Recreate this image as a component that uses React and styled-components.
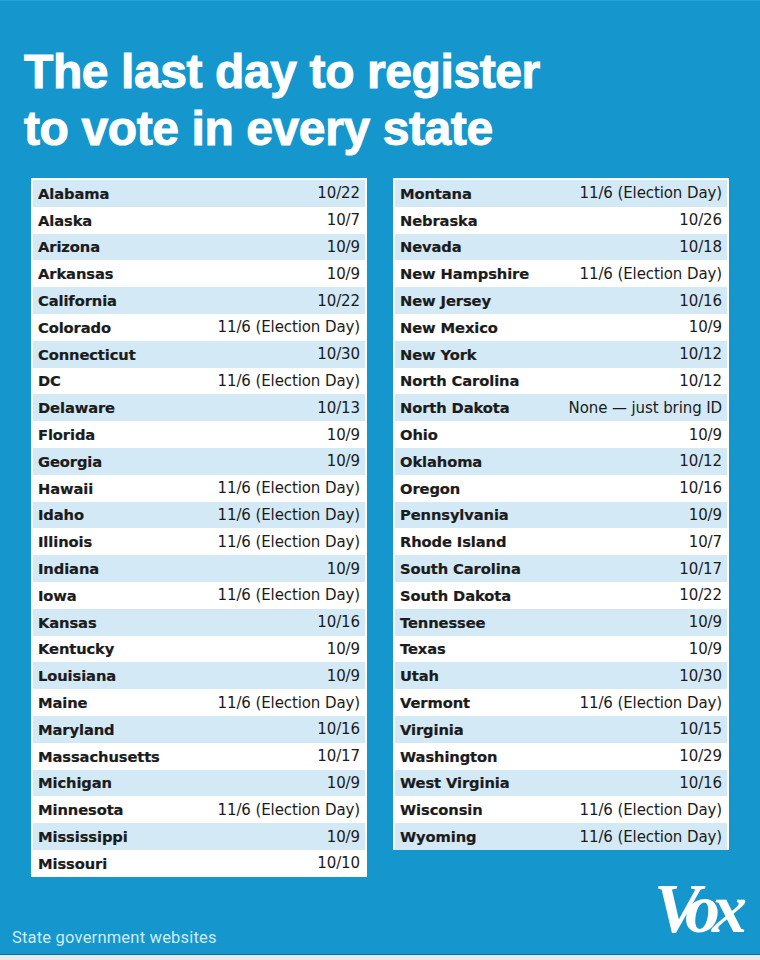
import React from "react";
import styled, { createGlobalStyle } from "styled-components";

const LEFT = [
  ["Alabama", "10/22"],
  ["Alaska", "10/7"],
  ["Arizona", "10/9"],
  ["Arkansas", "10/9"],
  ["California", "10/22"],
  ["Colorado", "11/6 (Election Day)"],
  ["Connecticut", "10/30"],
  ["DC", "11/6 (Election Day)"],
  ["Delaware", "10/13"],
  ["Florida", "10/9"],
  ["Georgia", "10/9"],
  ["Hawaii", "11/6 (Election Day)"],
  ["Idaho", "11/6 (Election Day)"],
  ["Illinois", "11/6 (Election Day)"],
  ["Indiana", "10/9"],
  ["Iowa", "11/6 (Election Day)"],
  ["Kansas", "10/16"],
  ["Kentucky", "10/9"],
  ["Louisiana", "10/9"],
  ["Maine", "11/6 (Election Day)"],
  ["Maryland", "10/16"],
  ["Massachusetts", "10/17"],
  ["Michigan", "10/9"],
  ["Minnesota", "11/6 (Election Day)"],
  ["Mississippi", "10/9"],
  ["Missouri", "10/10"],
];

const RIGHT = [
  ["Montana", "11/6 (Election Day)"],
  ["Nebraska", "10/26"],
  ["Nevada", "10/18"],
  ["New Hampshire", "11/6 (Election Day)"],
  ["New Jersey", "10/16"],
  ["New Mexico", "10/9"],
  ["New York", "10/12"],
  ["North Carolina", "10/12"],
  ["North Dakota", "None — just bring ID"],
  ["Ohio", "10/9"],
  ["Oklahoma", "10/12"],
  ["Oregon", "10/16"],
  ["Pennsylvania", "10/9"],
  ["Rhode Island", "10/7"],
  ["South Carolina", "10/17"],
  ["South Dakota", "10/22"],
  ["Tennessee", "10/9"],
  ["Texas", "10/9"],
  ["Utah", "10/30"],
  ["Vermont", "11/6 (Election Day)"],
  ["Virginia", "10/15"],
  ["Washington", "10/29"],
  ["West Virginia", "10/16"],
  ["Wisconsin", "11/6 (Election Day)"],
  ["Wyoming", "11/6 (Election Day)"],
];

function StateTable({ rows }) {
  return (
    <Table>
      {rows.map(([name, date], i) => (
        <Row key={name} $shaded={i % 2 === 0}>
          <StateName>{name}</StateName>
          <Deadline>{date}</Deadline>
        </Row>
      ))}
    </Table>
  );
}

function App() {
  return (
    <>
      <GlobalStyle />
      <Page>
        <Title>
          The last day to register
          <br />
          to vote in every state
        </Title>

        <Columns>
          <StateTable rows={LEFT} />
          <StateTable rows={RIGHT} />
        </Columns>

        <Footer>
          <Source>State government websites</Source>
          <Logo>Vox</Logo>
        </Footer>
        <BottomBand />
      </Page>
    </>
  );
}

const GlobalStyle = createGlobalStyle`
  body {
    margin: 0;
    background: #1597ce;
  }
`;

const Page = styled.div`
  width: 760px;
  height: 960px;
  background: #1597ce;
  display: flex;
  flex-direction: column;
  box-sizing: border-box;
  border-top: 1px solid #2aa3d6;
  overflow: hidden;
`;

// 1.제목
const Title = styled.h1`
  margin: 0;
  padding: 42px 0 0 24px;
  font-family: "Liberation Sans", Arial, sans-serif;
  font-weight: 700;
  font-size: 48px;
  line-height: 57px;
  letter-spacing: -0.4px;
  color: #fff;
  -webkit-text-stroke: 1px #fff;
`;

// 2.표 두 개
const Columns = styled.div`
  display: grid;
  grid-template-columns: 336px 336px;
  column-gap: 26px;
  align-items: start;
  margin-top: 21px;
  padding-left: 31px;
`;

const Table = styled.div`
  background: #fff;
  padding: 2px 2px 0;
  display: flex;
  flex-direction: column;
`;

const Row = styled.div`
  height: 26.8px;
  display: flex;
  align-items: center;
  justify-content: space-between;
  padding: 0 5px;
  background: ${(p) => (p.$shaded ? "#d3e9f6" : "#fff")};
  color: #1b1b1b;
  font-family: "DejaVu Sans", sans-serif;
`;

const StateName = styled.span`
  font-weight: 700;
  font-size: 14.7px;
  letter-spacing: -0.1px;
  -webkit-text-stroke: 0.2px #1b1b1b;
`;

const Deadline = styled.span`
  font-weight: 400;
  font-size: 15px;
  letter-spacing: -0.1px;
`;

// 3.출처, 로고
const Footer = styled.div`
  margin-top: auto;
  display: flex;
  align-items: flex-end;
  justify-content: space-between;
  padding: 0 15px 5px 12px;
`;

const Source = styled.div`
  font-family: Roboto, "Liberation Sans", sans-serif;
  font-weight: 400;
  font-size: 16.5px;
  letter-spacing: 0.2px;
  color: #cfeaf6;
  padding-bottom: 2px;
`;

const Logo = styled.div`
  font-family: "Liberation Serif", "Times New Roman", serif;
  font-style: italic;
  font-weight: 700;
  font-size: 70px;
  line-height: 56px;
  letter-spacing: -8px;
  color: #fff;
  padding: 0 6px 12px 0;
`;

const BottomBand = styled.div`
  height: 5px;
  border-top: 1px solid #0e6f98;
  background: #e6eaec;
`;

export default App;
